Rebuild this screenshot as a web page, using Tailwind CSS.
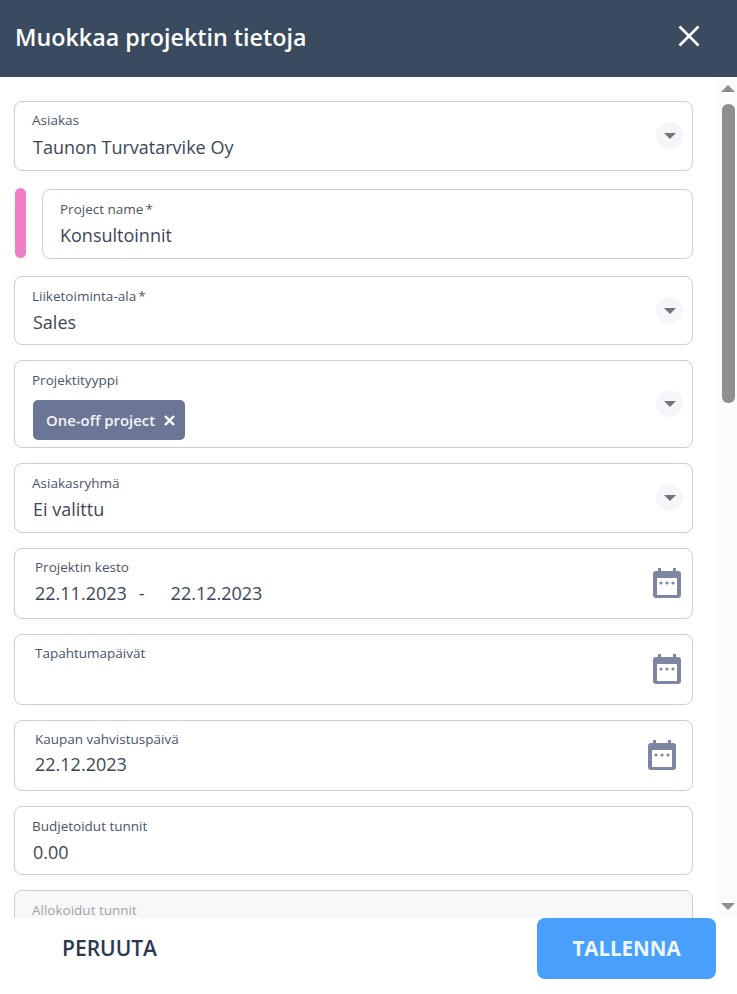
<!DOCTYPE html>
<html lang="en">
<head>
    <meta charset="UTF-8">
    <title>Muokkaa projektin tietoja</title>
    <script src="https://cdn.jsdelivr.net/npm/@tailwindcss/browser@4"></script>
</head>
<body class="h-[994px] w-[737px] overflow-hidden bg-white font-['Open_Sans',sans-serif]">
    <!-- Header -->
    <div class="h-[77px] bg-[#3a4a5f] flex items-start justify-between pl-[15px] pr-[37px]">
        <h1 class="mt-[21px] text-[23.3px] font-semibold text-white leading-[32px]">Muokkaa projektin tietoja</h1>
        <svg class="mt-[25px] w-[22px] h-[22px]" viewBox="0 0 22 22" fill="none" stroke="white" stroke-width="2.6"><path d="M1.5 1.5L20.5 20.5M20.5 1.5L1.5 20.5"/></svg>
    </div>

    <!-- Form -->
    <div class="relative h-[841px] overflow-hidden">
        <div class="pl-[14px] w-[693px] pt-[24px] flex flex-col">
            <div class="h-[70px] border border-[#c5cfe0] rounded-lg pl-[17px] pt-[9px] relative">
                <div class="text-[13.5px] leading-[19px] text-[#4a5568]">Asiakas</div>
                <div class="text-[18px] leading-[25px] text-[#3d4657] mt-[5px] ml-[1px]">Taunon Turvatarvike Oy</div>
                <div class="absolute right-[9px] top-[20px] w-[27px] h-[27px] rounded-full bg-[#f5f6fa] flex items-center justify-center"><div class="w-0 h-0 border-x-[6px] border-x-transparent border-t-[6px] border-t-[#757575]"></div></div>
            </div>

            <div class="flex mt-[18px] h-[70px]">
                <div class="w-[11px] ml-[1px] h-[70px] -mt-[1px] bg-[#ee7fc4] rounded-md"></div>
                <div class="ml-[16px] flex-1 border border-[#c5cfe0] rounded-lg pl-[17px] pt-[10px]">
                    <div class="text-[13.5px] leading-[19px] text-[#4a5568]">Project name<span class="ml-[2px]">*</span></div>
                    <div class="text-[18px] leading-[25px] text-[#3d4657] mt-[4px]">Konsultoinnit</div>
                </div>
            </div>

            <div class="h-[69px] mt-[17px] border border-[#c5cfe0] rounded-lg pl-[17px] pt-[10px] relative">
                <div class="text-[13.5px] leading-[19px] text-[#4a5568]">Liiketoiminta-ala<span class="ml-[2px]">*</span></div>
                <div class="text-[18px] leading-[25px] text-[#3d4657] mt-[4px] ml-[1px]">Sales</div>
                <div class="absolute right-[9px] top-[20px] w-[27px] h-[27px] rounded-full bg-[#f5f6fa] flex items-center justify-center"><div class="w-0 h-0 border-x-[6px] border-x-transparent border-t-[6px] border-t-[#757575]"></div></div>
            </div>

            <div class="h-[88px] mt-[15px] border border-[#c5cfe0] rounded-lg pl-[17px] pt-[10px] relative">
                <div class="text-[13.5px] leading-[19px] text-[#4a5568]">Projektityyppi</div>
                <div class="mt-[10px] ml-[1px] w-[152px] h-[40px] bg-[#6b7696] rounded-[5px] flex items-center pl-[13px]">
                    <span class="mt-[1px] w-[118px] whitespace-nowrap text-[14.9px] font-semibold text-[#f3f4f8]">One-off project</span>
                    <svg class="w-[11px] h-[11px]" viewBox="0 0 11 11" fill="none" stroke="white" stroke-width="2.4"><path d="M1 1L10 10M10 1L1 10"/></svg>
                </div>
                <div class="absolute right-[9px] top-[29px] w-[27px] h-[27px] rounded-full bg-[#f5f6fa] flex items-center justify-center"><div class="w-0 h-0 border-x-[6px] border-x-transparent border-t-[6px] border-t-[#757575]"></div></div>
            </div>

            <div class="h-[70px] mt-[15px] border border-[#c5cfe0] rounded-lg pl-[17px] pt-[10px] relative">
                <div class="text-[13.5px] leading-[19px] text-[#4a5568]">Asiakasryhmä</div>
                <div class="text-[18px] leading-[25px] text-[#3d4657] mt-[4px] ml-[1px]">Ei valittu</div>
                <div class="absolute right-[9px] top-[20px] w-[27px] h-[27px] rounded-full bg-[#f5f6fa] flex items-center justify-center"><div class="w-0 h-0 border-x-[6px] border-x-transparent border-t-[6px] border-t-[#757575]"></div></div>
            </div>

            <div class="h-[71px] mt-[15px] border border-[#c5cfe0] rounded-lg pl-[20px] pt-[9px] relative">
                <div class="text-[13.5px] leading-[19px] text-[#4a5568]">Projektin kesto</div>
                <div class="text-[18px] leading-[25px] text-[#3d4657] mt-[4px] flex">
                    <span>22.11.2023</span><span class="ml-[12px]">-</span><span class="ml-[26px]">22.12.2023</span>
                </div>
                <svg class="absolute right-[11px] top-[19px] w-[28px] h-[30px]" viewBox="0 0 28 30"><path fill="#7d86a3" d="M5 0h3v3h12V0h3v3h2a3 3 0 0 1 3 3v21a3 3 0 0 1-3 3H3a3 3 0 0 1-3-3V6a3 3 0 0 1 3-3h2z"/><rect x="4" y="10" width="20" height="17" fill="white"/><circle cx="8" cy="15" r="1.6" fill="#7d86a3"/><circle cx="14" cy="15" r="1.6" fill="#7d86a3"/><circle cx="20" cy="15" r="1.6" fill="#7d86a3"/></svg>
            </div>

            <div class="h-[71px] mt-[15px] border border-[#c5cfe0] rounded-lg pl-[20px] pt-[9px] relative">
                <div class="text-[13.5px] leading-[19px] text-[#4a5568]">Tapahtumapäivät</div>
                <svg class="absolute right-[11px] top-[19px] w-[28px] h-[30px]" viewBox="0 0 28 30"><path fill="#7d86a3" d="M5 0h3v3h12V0h3v3h2a3 3 0 0 1 3 3v21a3 3 0 0 1-3 3H3a3 3 0 0 1-3-3V6a3 3 0 0 1 3-3h2z"/><rect x="4" y="10" width="20" height="17" fill="white"/><circle cx="8" cy="15" r="1.6" fill="#7d86a3"/><circle cx="14" cy="15" r="1.6" fill="#7d86a3"/><circle cx="20" cy="15" r="1.6" fill="#7d86a3"/></svg>
            </div>

            <div class="h-[71px] mt-[15px] border border-[#c5cfe0] rounded-lg pl-[20px] pt-[9px] relative">
                <div class="text-[13.5px] leading-[19px] text-[#4a5568]">Kaupan vahvistuspäivä</div>
                <div class="text-[18px] leading-[25px] text-[#3d4657] mt-[3px]">22.12.2023</div>
                <svg class="absolute right-[16px] top-[19px] w-[28px] h-[30px]" viewBox="0 0 28 30"><path fill="#7d86a3" d="M5 0h3v3h12V0h3v3h2a3 3 0 0 1 3 3v21a3 3 0 0 1-3 3H3a3 3 0 0 1-3-3V6a3 3 0 0 1 3-3h2z"/><rect x="4" y="10" width="20" height="17" fill="white"/><circle cx="8" cy="15" r="1.6" fill="#7d86a3"/><circle cx="14" cy="15" r="1.6" fill="#7d86a3"/><circle cx="20" cy="15" r="1.6" fill="#7d86a3"/></svg>
            </div>

            <div class="h-[69px] mt-[15px] border border-[#c5cfe0] rounded-lg pl-[17px] pt-[10px]">
                <div class="text-[13.5px] leading-[19px] text-[#4a5568]">Budjetoidut tunnit</div>
                <div class="text-[18px] leading-[25px] text-[#3d4657] mt-[4px] ml-[1px]">0.00</div>
            </div>

            <div class="h-[70px] mt-[15px] border border-[#c5cfe0] rounded-lg pl-[17px] pt-[10px] bg-[#f8f8f8]">
                <div class="text-[13.5px] leading-[19px] text-[#a3a3a3]">Allokoidut tunnit</div>
            </div>
        </div>

        <!-- Scrollbar -->
        <div class="absolute right-0 top-0 bottom-0 w-[20px] bg-[#fbfbfb]">
            <div class="absolute left-[4px] top-[8px] w-0 h-0 border-x-[7px] border-x-transparent border-b-[7px] border-b-[#8f8f8f]"></div>
            <div class="absolute left-[5px] top-[27px] w-[13px] h-[299px] bg-[#8f8f8f] rounded-t-md rounded-b-md"></div>
            <div class="absolute left-[4px] bottom-[8px] w-0 h-0 border-x-[7px] border-x-transparent border-t-[7px] border-t-[#8f8f8f]"></div>
        </div>
    </div>

    <!-- Footer -->
    <div class="h-[76px] bg-white flex items-start justify-between pl-[62px] pr-[21px]">
        <button class="mt-[16px] text-[21px] leading-[28px] font-semibold text-[#2d3850]">PERUUTA</button>
        <button class="w-[179px] h-[61px] bg-[#48a0fc] rounded-lg text-[20.5px] font-bold text-[#eef6ff]">TALLENNA</button>
    </div>
</body>
</html>
